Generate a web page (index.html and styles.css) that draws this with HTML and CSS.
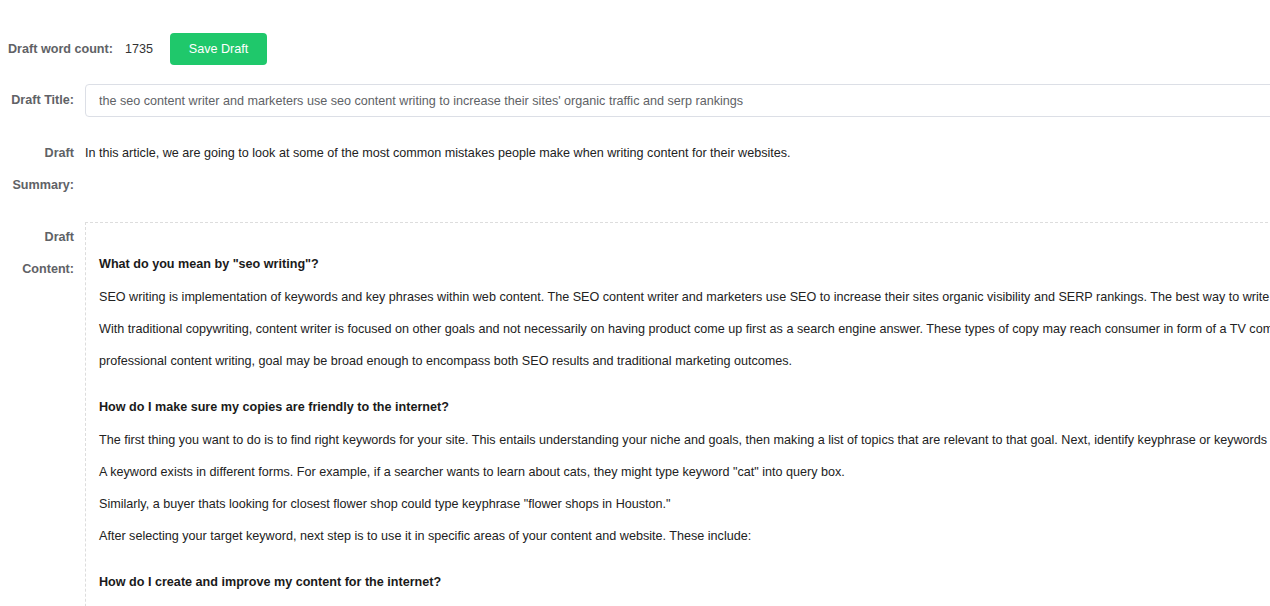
FILE: index.html
```html
<!DOCTYPE html>
<html lang="en">
<head>
<meta charset="utf-8">
<title>Draft</title>
<link rel="stylesheet" href="styles.css">
</head>
<body>
<div class="page">
  <div class="count-row">
    <span class="count-label">Draft word count:</span>
    <span class="count-value">1735</span>
    <button class="save-btn" type="button">Save Draft</button>
  </div>

  <div class="form-item">
    <label class="label">Draft Title:</label>
    <div class="field">
      <input class="input" type="text" value="the seo content writer and marketers use seo content writing to increase their sites' organic traffic and serp rankings">
    </div>
  </div>

  <div class="form-item">
    <label class="label">Draft Summary:</label>
    <div class="field summary">In this article, we are going to look at some of the most common mistakes people make when writing content for their websites.</div>
  </div>

  <div class="form-item">
    <label class="label">Draft Content:</label>
    <div class="field">
      <div class="content">
        <h3 class="heading">What do you mean by "seo writing"?</h3>
        <p class="para">SEO writing is implementation of keywords and key phrases within web content. The SEO content writer and marketers use SEO to increase their sites organic visibility and SERP rankings. The best way to write for SEO is to provide quality content.</p>
        <p class="para">With traditional copywriting, content writer is focused on other goals and not necessarily on having product come up first as a search engine answer. These types of copy may reach consumer in form of a TV commercial, radio spot or print ad. In<br>professional content writing, goal may be broad enough to encompass both SEO results and traditional marketing outcomes.</p>
        <h3 class="heading">How do I make sure my copies are friendly to the internet?</h3>
        <p class="para">The first thing you want to do is to find right keywords for your site. This entails understanding your niche and goals, then making a list of topics that are relevant to that goal. Next, identify keyphrase or keywords for each topic.</p>
        <p class="para">A keyword exists in different forms. For example, if a searcher wants to learn about cats, they might type keyword "cat" into query box.</p>
        <p class="para">Similarly, a buyer thats looking for closest flower shop could type keyphrase "flower shops in Houston."</p>
        <p class="para">After selecting your target keyword, next step is to use it in specific areas of your content and website. These include:</p>
        <h3 class="heading">How do I create and improve my content for the internet?</h3>
        <p class="para">Creating content for the internet starts with understanding what your audience is searching for and why.</p>
      </div>
    </div>
  </div>
</div>
</body>
</html>
```

FILE: styles.css
```css
html, body {
  margin: 0;
  padding: 0;
  overflow: hidden;
  background: #ffffff;
}

body {
  font-family: "Liberation Sans", Arial, sans-serif;
  font-size: 12.6px;
  color: #333333;
}

.page {
  width: 2000px;
  padding: 33px 0 0 8px;
}

.count-row {
  display: flex;
  align-items: center;
  height: 32px;
  margin-bottom: 19px;
}

.count-label {
  font-weight: bold;
  color: #606266;
}

.count-value {
  margin-left: 12px;
  color: #333333;
}

.save-btn {
  margin-left: 17px;
  width: 97px;
  height: 32px;
  border: none;
  border-radius: 4px;
  background: #1fc86b;
  color: #ffffff;
  font-family: "Liberation Sans", Arial, sans-serif;
  font-size: 12.6px;
  padding: 0;
  cursor: pointer;
}

.form-item {
  display: flex;
  align-items: flex-start;
  margin-bottom: 20px;
}

.label {
  flex: none;
  width: 66px;
  padding-right: 11px;
  text-align: right;
  line-height: 32px;
  font-weight: bold;
  color: #606266;
}

.field {
  flex: 1;
  min-width: 0;
}

.input {
  box-sizing: border-box;
  width: 100%;
  height: 33px;
  border: 1px solid #dcdfe6;
  border-radius: 4px;
  padding: 0 13px;
  font-family: "Liberation Sans", Arial, sans-serif;
  font-size: 12.6px;
  color: #606266;
  outline: none;
}

.summary {
  line-height: 32px;
  color: #222222;
}

.content {
  border: 1px dashed #dddddd;
  padding: 11px 13px 20px;
  margin-top: 1px;
}

.heading {
  margin: 13px 0 0;
  font-size: 12.6px;
  font-weight: bold;
  line-height: 34px;
  color: #1a1a1a;
}

.para {
  margin: 0;
  line-height: 32px;
  white-space: nowrap;
  color: #222222;
}
```
